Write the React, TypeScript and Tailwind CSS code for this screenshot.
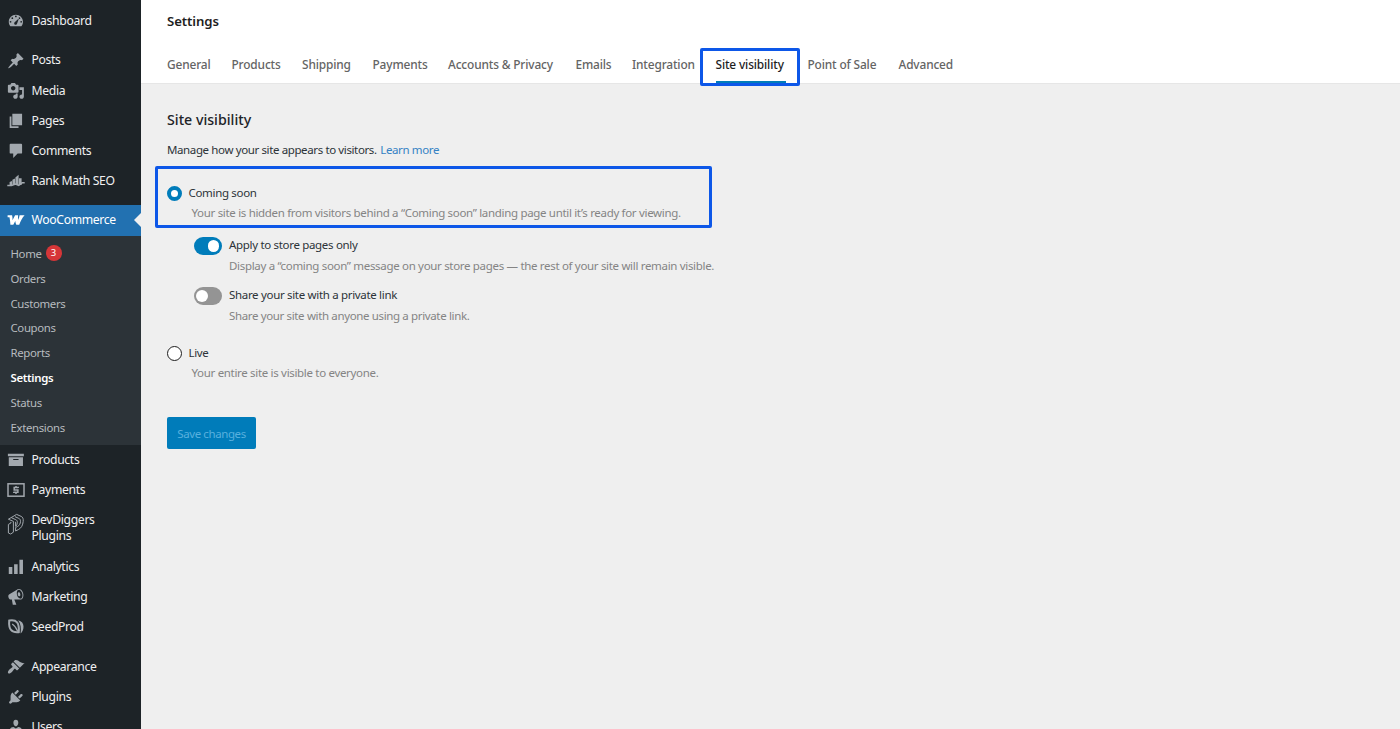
import type { ReactNode } from "react";
import clsx from "clsx";

type MenuItem = {
  label: string;
  icon: ReactNode;
  gap?: string;
  tall?: boolean;
};

const Icon = ({ d }: { d: string }) => (
  <svg viewBox="0 0 20 20" className="w-[17.75px] h-[17.75px] fill-current">
    <path d={d} />
  </svg>
);

const topItems: MenuItem[] = [
  {
    label: "Dashboard",
    gap: "mb-[9.5px]",
    icon: (
      <Icon d="M3.76 16h12.48c1.1-1.37 1.76-3.11 1.76-5 0-4.42-3.58-8-8-8s-8 3.58-8 8c0 1.89.66 3.63 1.76 5zM10 4c.55 0 1 .45 1 1s-.45 1-1 1-1-.45-1-1 .45-1 1-1zM6 6c.55 0 1 .45 1 1s-.45 1-1 1-1-.45-1-1 .45-1 1-1zm8 0c.55 0 1 .45 1 1s-.45 1-1 1-1-.45-1-1 .45-1 1-1zm-5.37 5.55L13.5 7l-2.1 6c-.3.9-.9 1.5-1.6 1.5-.9 0-1.7-.8-1.7-1.6 0-.57.14-1.08.53-1.35zM4 10c.55 0 1 .45 1 1s-.45 1-1 1-1-.45-1-1 .45-1 1-1zm12 0c.55 0 1 .45 1 1s-.45 1-1 1-1-.45-1-1 .45-1 1-1z" />
    ),
  },
  {
    label: "Posts",
    icon: (
      <Icon d="M10.44 3.02l1.82-1.82 6.36 6.35-1.83 1.82c-1.05-.68-2.48-.57-3.41.36l-.75.75c-.92.93-1.04 2.35-.35 3.41l-1.83 1.82-2.41-2.41-2.8 2.79c-.42.42-3.38 2.71-3.8 2.29s1.86-3.39 2.28-3.81l2.79-2.79L4.1 9.36l1.83-1.82c1.05.69 2.48.57 3.4-.36l.75-.75c.93-.92 1.05-2.35.36-3.41z" />
    ),
  },
  {
    label: "Media",
    icon: (
      <Icon d="M13 11V4c0-.55-.45-1-1-1h-1.67L9 1H5L3.67 3H2c-.55 0-1 .45-1 1v7c0 .55.45 1 1 1h10c.55 0 1-.45 1-1zM7 4.5c1.38 0 2.5 1.12 2.5 2.5S8.38 9.5 7 9.5 4.5 8.38 4.5 7 5.62 4.5 7 4.5zM14 6h5v10.5c0 1.38-1.12 2.5-2.5 2.5S14 17.88 14 16.5s1.12-2.5 2.5-2.5c.17 0 .34.02.5.05V9h-3V6zm-4 8.05V13h2v3.5c0 1.38-1.12 2.5-2.5 2.5S7 17.88 7 16.5 8.12 14 9.5 14c.17 0 .34.02.5.05z" />
    ),
  },
  {
    label: "Pages",
    icon: <Icon d="M6 15V2h11v13H6zm-1 1h8v2H3V5h2v11z" />,
  },
  {
    label: "Comments",
    icon: (
      <Icon d="M4 2h12c.55 0 1 .45 1 1v9c0 .55-.45 1-1 1h-4l-5 5v-5H4c-.55 0-1-.45-1-1V3c0-.55.45-1 1-1z" />
    ),
  },
  {
    label: "Rank Math SEO",
    gap: "mb-[9px]",
    icon: (
      <svg viewBox="0 0 18 18" className="w-[18px] h-[18px] fill-current">
        <path d="M2.6 10l2.4-1v4H2.6zM5.4 7.8L8 6.4V13H5.4zM8.4 5.4l3.2-2.6V13H8.4zM12 6.2h2.6V13H12z" />
        <path
          d="M.3 13.6h4.2l4-1.6 3.2 1.4 3.4-2.6h2.6"
          fill="none"
          stroke="currentColor"
          strokeWidth="1.5"
        />
      </svg>
    ),
  },
];

const bottomItems: MenuItem[] = [
  {
    label: "Products",
    icon: <Icon d="M19 3v3H1V3h18zM2 7h16v10H2V7zm11 3V9H7v1h6z" />,
  },
  {
    label: "Payments",
    icon: (
      <svg viewBox="0 0 18 18" className="w-[18px] h-[18px]">
        <rect
          x="1"
          y="2.8"
          width="16"
          height="12.4"
          fill="none"
          stroke="currentColor"
          strokeWidth="1.5"
        />
        <path
          d="M11.2 7V6.5H7.2v2.4h3.7v2.4H6.8v-.5M9 5v1.3M9 11.5v1.4"
          fill="none"
          stroke="currentColor"
          strokeWidth="1.5"
        />
      </svg>
    ),
  },
  {
    label: "DevDiggers Plugins",
    tall: true,
    icon: (
      <svg
        viewBox="0 0 18 24"
        className="w-[18px] h-6 fill-none stroke-current"
        strokeWidth="1"
        strokeLinejoin="round"
      >
        <path d="M1.4 7.2L9.6 2.4l4.6 2c1.7.8 2.2 2.4 2 5-.4 4-1.900 6.600-4.800 8.200l-2.800 1.400v-3.500l1.900-1c2-1.100 2.900-2.800 3-5.200 0-1.500-.5-2.400-1.700-2.900L8 4.700" />
        <path d="M1.4 7.200l5 2.200v10.800L3.700 22l-2.300-1v-8.600L3.900 11V9.900M4.400 5.700l4.400 2c1.200.5 1.700 1.500 1.500 3-.1 1.700-.7 2.900-1.700 3.700V9.800" />
      </svg>
    ),
  },
  {
    label: "Analytics",
    icon: <Icon d="M18 18V2h-4v16h4zm-6 0V7H8v11h4zm-6 0v-8H2v8h4z" />,
  },
  {
    label: "Marketing",
    icon: (
      <Icon d="M18.15 5.94c.46 1.62.38 3.22-.02 4.48-.42 1.28-1.26 2.18-2.3 2.48-.16.06-.26.06-.4.06-.06.02-.12.02-.18.02-.06.02-.14.02-.22.02h-6.8l2.22 5.5c.02.14-.06.26-.14.34-.08.1-.24.16-.34.16H6.95c-.1 0-.26-.06-.34-.16-.08-.08-.16-.2-.14-.34l-1-5.5H4.25l-.02-.02c-.5.06-1.08-.18-1.54-.62s-.88-1.08-1.06-1.88c-.24-.8-.2-1.56-.02-2.2.18-.62.58-1.08 1.06-1.3l.02-.02 9-5.4c.1-.06.18-.1.24-.16.06-.04.14-.08.24-.12.16-.08.28-.12.5-.18 1.04-.3 2.24.1 3.22.98s1.84 2.24 2.26 3.86zm-2.58 5.98h-.02c.4-.1.74-.34 1.04-.7.58-.7.86-1.76.86-3.04 0-.64-.1-1.3-.28-1.98-.34-1.36-1.02-2.5-1.78-3.24s-1.68-1.1-2.46-.88c-.82.22-1.4.96-1.7 2-.32 1.04-.28 2.36.06 3.72.38 1.36 1 2.5 1.8 3.24.78.74 1.62 1.1 2.48.88zm-2.54-7.08c.22-.04.42-.02.62.04.38.16.76.48 1.02 1s.42 1.2.42 1.78c0 .3-.04.56-.12.8-.18.48-.44.84-.86.94-.34.1-.8-.06-1.14-.4s-.64-.86-.78-1.5c-.18-.62-.12-1.24.02-1.72s.48-.84.82-.94z" />
    ),
  },
  {
    label: "SeedProd",
    gap: "mb-[9.3px]",
    icon: (
      <svg viewBox="0 0 18 18" className="w-[18px] h-[18px]">
        <path
          d="M2.2 2.6c3.2-.6 6.100-.3 7.900 1.700 1.700 2 2 5.300 1.700 9.900-3.200.4-6.100-.2-7.800-2.300C2.200 9.800 1.900 6.600 2.200 2.600z"
          fill="none"
          stroke="currentColor"
          strokeWidth="2"
        />
        <path
          d="M5.200 6c2.800 1.800 4.400 4.300 5.600 7.600"
          fill="none"
          stroke="currentColor"
          strokeWidth="1.2"
        />
        <path
          d="M11.2 2.200c3.600.8 5.300 3.300 5.300 6.400 0 3.100-1 5.300-2.900 7 .6-5.400.3-9.600-2.400-13.400z"
          fill="currentColor"
        />
      </svg>
    ),
  },
  {
    label: "Appearance",
    icon: (
      <Icon d="M14.48 11.06L7.41 3.99l1.5-1.5c.5-.56 2.3-.47 3.51.32 1.21.8 1.43 1.28 2.91 2.1 1.18.64 2.45 1.26 4.45.85zm-.71.71L6.7 4.7 4.93 6.47c-.39.39-.39 1.02 0 1.41l1.06 1.06c.39.39.39 1.03 0 1.42-.6.6-1.43 1.11-2.21 1.69-.35.26-.7.53-1.01.84C1.43 14.23.4 16.08 1.4 17.07c.99 1 2.84-.03 4.18-1.36.31-.31.58-.66.85-1.02.57-.78 1.08-1.61 1.69-2.21.39-.39 1.02-.39 1.41 0l1.06 1.06c.39.39 1.02.39 1.41 0z" />
    ),
  },
  {
    label: "Plugins",
    icon: (
      <Icon d="M13.11 4.36L9.87 7.6 8 5.73l3.24-3.24c.35-.34 1.05-.2 1.56.32.52.51.66 1.21.31 1.55zm-8 1.77l.91-1.12 9.01 9.01-1.19.84c-.71.71-2.63 1.16-3.82 1.16H6.14L4.9 17.26c-.59.59-1.54.59-2.12 0-.59-.58-.59-1.53 0-2.12l1.24-1.24v-3.88c0-1.13.4-3.19 1.09-3.89zm7.26 3.97l3.24-3.24c.34-.35 1.04-.21 1.55.31.52.51.66 1.21.31 1.55l-3.24 3.25z" />
    ),
  },
  {
    label: "Users",
    icon: (
      <Icon d="M10 9.25c-2.27 0-2.73-3.44-2.73-3.44C7 4.02 7.82 2 9.97 2c2.16 0 2.98 2.02 2.71 3.81 0 0-.41 3.44-2.68 3.44zm0 2.57L12.72 10c2.39 0 4.52 2.33 4.52 4.53v2.49s-3.65 1.13-7.24 1.13c-3.65 0-7.24-1.13-7.24-1.13v-2.49c0-2.25 1.94-4.48 4.47-4.48z" />
    ),
  },
];

const subItems = [
  "Home",
  "Orders",
  "Customers",
  "Coupons",
  "Reports",
  "Settings",
  "Status",
  "Extensions",
];

const tabs = [
  { label: "General", width: "w-[64.5px]" },
  { label: "Products", width: "w-[70.5px]" },
  { label: "Shipping", width: "w-[70.5px]" },
  { label: "Payments", width: "w-[75.5px]" },
  { label: "Accounts & Privacy", width: "w-[127.5px]" },
  { label: "Emails", width: "w-[56.5px]" },
  { label: "Integration", width: "w-[83.5px]" },
  { label: "Site visibility", width: "w-[92px]" },
  { label: "Point of Sale", width: "w-[91px]" },
  { label: "Advanced", width: "w-[60px]" },
];

function SidebarItem({ item }: { item: MenuItem }) {
  return (
    <li
      className={clsx(
        "flex shrink-0 pl-[7px] text-[#a2a8ae]",
        item.tall ? "h-[46.5px]" : "h-[30.2px] items-center",
        item.gap
      )}
    >
      <span
        className={clsx(
          "w-[18px] flex justify-center mr-[6.5px]",
          item.tall && "pt-[7px]"
        )}
      >
        {item.icon}
      </span>
      <span
        className={clsx(
          "text-[#f0f0f1]",
          item.tall && "w-[80px] pt-[7px] leading-4"
        )}
      >
        {item.label}
      </span>
    </li>
  );
}

function Toggle({ on }: { on?: boolean }) {
  return (
    <span
      className={clsx(
        "flex items-center w-7 h-[17.5px] rounded-full px-[2.5px] shrink-0",
        on ? "bg-[#007cba] justify-end" : "bg-[#949494]"
      )}
    >
      <span className="w-[11.5px] h-[11.5px] rounded-full bg-white" />
    </span>
  );
}

export default function App() {
  return (
    <div className="flex h-[729px] w-[1400px] overflow-hidden bg-[#efefef] font-['Noto_Sans','Open_Sans',sans-serif] text-[11.5px] tracking-[-0.32px] text-[#2c3338]">
      {/* Admin menu */}
      <nav className="w-[141px] shrink-0 bg-[#1d2327] pt-[5.7px] overflow-hidden text-[12.2px] tracking-[-0.34px]">
        <ul>
          {topItems.map((item) => (
            <SidebarItem key={item.label} item={item} />
          ))}
        </ul>

        <div className="flex items-center h-[30.2px] bg-[#2271b1] text-white pl-[7px]">
          <svg
            viewBox="0 0 18 12"
            className="w-[18px] h-3 mr-[6.5px] fill-current"
          >
            <path d="M.6 1.2h4.5c.4 1.7.5 3.300.4 5l2.600-5h3c-.2 1.700-.1 3.300.2 4.900.6-1.500 1-3.200 1.300-4.900h5c-2.400 2.700-4.200 5.900-5.400 9.600H9.300c-.6-1.300-.9-2.500-1-3.800l-2 3.800H3.400C3.200 8 3 5.700 2.500 3.300H.6z" />
          </svg>
          <span className="flex-1">WooCommerce</span>
          <svg viewBox="0 0 7 14" className="w-[7px] h-[14px] fill-[#efefef]">
            <path d="M7 0v14L0 7z" />
          </svg>
        </div>

        <ul className="h-[209.6px] bg-[#2c3338] pt-[5.6px] pl-[10.5px] text-[11.4px]">
          {subItems.map((label) => (
            <li
              key={label}
              className={clsx(
                "flex items-center h-[24.8px]",
                label === "Settings"
                  ? "font-semibold text-white"
                  : "text-[#b7bbbf]"
              )}
            >
              {label}
              {label === "Home" && (
                <span className="ml-[4px] w-4 h-4 rounded-full bg-[#d63638] text-white text-[9.5px] leading-4 text-center tracking-normal">
                  3
                </span>
              )}
            </li>
          ))}
        </ul>

        <ul>
          {bottomItems.map((item) => (
            <SidebarItem key={item.label} item={item} />
          ))}
        </ul>
      </nav>

      <main className="flex-1">
        {/* Header */}
        <header className="h-[83.5px] bg-white border-b border-[#e6e6e6] pl-[26px]">
          <h1 className="pt-[11px] h-[46px] text-[13.2px] leading-5 font-semibold text-[#1e1e1e] tracking-[-0.1px]">
            Settings
          </h1>
          <div className="flex h-[37px] text-[11.9px] font-[550] tracking-[-0.15px] text-[#646464] whitespace-nowrap">
            {tabs.map(({ label, width }) => (
              <div key={label} className={clsx("leading-[37px]", width)}>
                {label === "Site visibility" ? (
                  <div className="relative w-[70.5px] h-[37px] border-b-2 border-[#007cba] text-[#1e1e1e]">
                    {label}
                    <span className="absolute -left-4 top-[2px] w-[100px] h-[38px] border-[3px] border-[#0d57e8] rounded-[2px]" />
                  </div>
                ) : (
                  label
                )}
              </div>
            ))}
          </div>
        </header>

        {/* Site visibility form */}
        <section className="relative pl-[26px] pt-[26.5px]">
          <span className="absolute left-[14px] top-[82px] w-[557px] h-[62px] border-[3px] border-[#0d57e8] rounded-[2px]" />

          <h2 className="text-[14.2px] leading-5 font-medium tracking-normal text-[#1d2327]">
            Site visibility
          </h2>
          <p className="mt-[12px] leading-4 tracking-[-0.38px]">
            Manage how your site appears to visitors.{" "}
            <a className="text-[#3582c4] ml-px">Learn more</a>
          </p>

          <div className="mt-[27px] flex items-center leading-4">
            <span className="w-[15px] h-[15px] rounded-full border-4 border-[#007cba] bg-white mr-[6.5px]" />
            Coming soon
          </div>
          <p className="pl-[24.5px] mt-[4px] leading-4 text-[#848484]">
            Your site is hidden from visitors behind a “Coming soon” landing
            page until it’s ready for viewing.
          </p>

          <div className="pl-[26.5px] pt-[16px] flex">
            <Toggle on />
            <div className="pl-[7.5px]">
              <div className="leading-4">Apply to store pages only</div>
              <p className="mt-[5px] leading-4 text-[#848484]">
                Display a “coming soon” message on your store pages — the rest
                of your site will remain visible.
              </p>
            </div>
          </div>

          <div className="pl-[26.5px] pt-[13px] flex">
            <Toggle />
            <div className="pl-[7.5px]">
              <div className="leading-4">Share your site with a private link</div>
              <p className="mt-[5px] leading-4 tracking-[-0.36px] text-[#848484]">
                Share your site with anyone using a private link.
              </p>
            </div>
          </div>

          <div className="mt-[21px] flex items-center leading-4">
            <span className="w-[15px] h-[15px] rounded-full border border-[#1e1e1e] bg-white mr-[6.5px]" />
            Live
          </div>
          <p className="pl-[24.5px] mt-[4px] leading-4 text-[#848484]">
            Your entire site is visible to everyone.
          </p>

          <button className="mt-[36px] pt-px w-[89px] h-[31.5px] rounded-[2px] bg-[#007cba] text-[#58b0de] tracking-[-0.4px]">
            Save changes
          </button>
        </section>
      </main>
    </div>
  );
}
